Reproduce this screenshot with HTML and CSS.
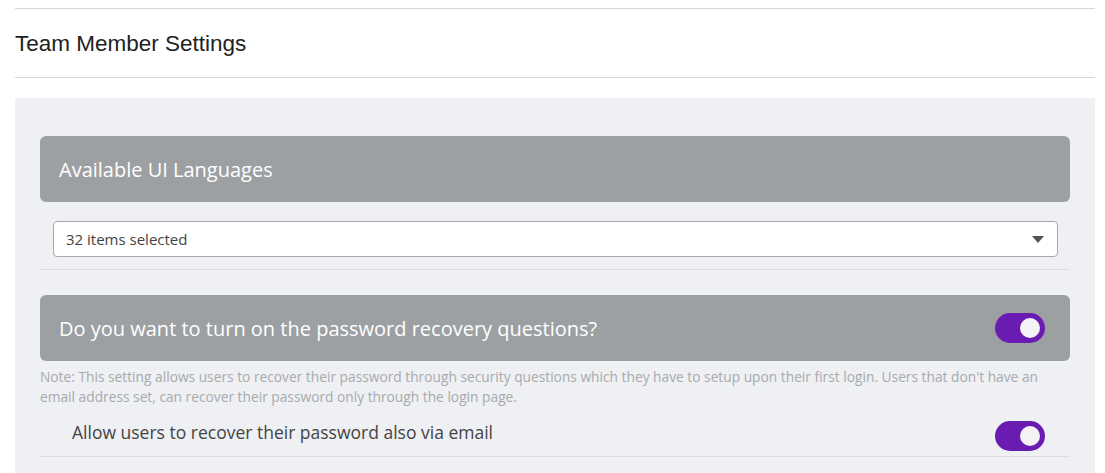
FILE: index.html
```html
<!DOCTYPE html>
<html>
<head>
<meta charset="utf-8">
<link rel="stylesheet" href="styles.css">
</head>
<body>
<div class="page">
  <div class="title-bar"><h1 class="title">Team Member Settings</h1></div>
  <div class="panel">
    <div class="section-head"><span>Available UI Languages</span></div>
    <div class="select-wrap">
      <div class="select">
        <span>32 items selected</span>
        <svg class="caret" width="12" height="7" viewBox="0 0 12 7"><path d="M0 0H12L6 7Z" fill="#555"/></svg>
      </div>
    </div>
    <div class="section-head gap">
      <span>Do you want to turn on the password recovery questions?</span>
      <span class="toggle"><span class="knob"></span></span>
    </div>
    <p class="note">Note: This setting allows users to recover their password through security questions which they have to setup upon their first login. Users that don't have an email address set, can recover their password only through the login page.</p>
    <div class="option-row">
      <span>Allow users to recover their password also via email</span>
      <span class="toggle low"><span class="knob"></span></span>
    </div>
  </div>
</div>
</body>
</html>
```
FILE: styles.css
```css
html, body { margin: 0; padding: 0; background: #fff; }
.page { padding: 8px 10px 0 15px; }
.title-bar {
  border-top: 1px solid #d6d6d6;
  border-bottom: 1px solid #d6d6d6;
  height: 68px;
  display: flex;
  align-items: center;
}
.title {
  margin: 2px 0 0 0;
  font-family: "Liberation Sans", Arial, sans-serif;
  font-weight: normal;
  font-size: 22.5px;
  color: #222;
}
.panel {
  margin-top: 20px;
  background: #eef0f3;
  padding: 38px 25px 40px 25px;
  min-height: 330px;
  font-family: "Open Sans", sans-serif;
}
.section-head {
  height: 66px;
  background: #9da0a3;
  border-radius: 6px;
  display: flex;
  align-items: center;
  justify-content: space-between;
  padding: 0 25px 0 19px;
  color: #fff;
  font-size: 20px;
}
.section-head.gap { margin-top: 25px; }
.select-wrap {
  padding: 19px 12px 12px 13px;
  border-bottom: 1px solid #dcdddf;
}
.select {
  height: 34px;
  background: #fff;
  border: 1px solid #a9a9a9;
  border-radius: 4px;
  display: flex;
  align-items: center;
  justify-content: space-between;
  padding: 0 13px 0 12px;
  font-size: 15px;
  color: #444;
}
.caret { display: block; }
.toggle {
  width: 50px;
  height: 30px;
  border-radius: 15px;
  background: #6a1cb2;
  display: flex;
  align-items: center;
  justify-content: flex-end;
  padding-right: 5px;
  box-sizing: border-box;
  flex-shrink: 0;
}
.toggle.low { margin-top: 9px; }
.knob {
  width: 20px;
  height: 20px;
  border-radius: 50%;
  background: #f4f4f6;
}
.note {
  margin: 6px 0 0 0;
  font-size: 13.75px;
  line-height: 20px;
  color: #a8aaad;
}
.option-row {
  height: 49px;
  display: flex;
  align-items: center;
  justify-content: space-between;
  padding: 0 25px 0 32px;
  border-bottom: 1px solid #dcdddf;
  font-size: 17.5px;
  color: #444;
}
```
